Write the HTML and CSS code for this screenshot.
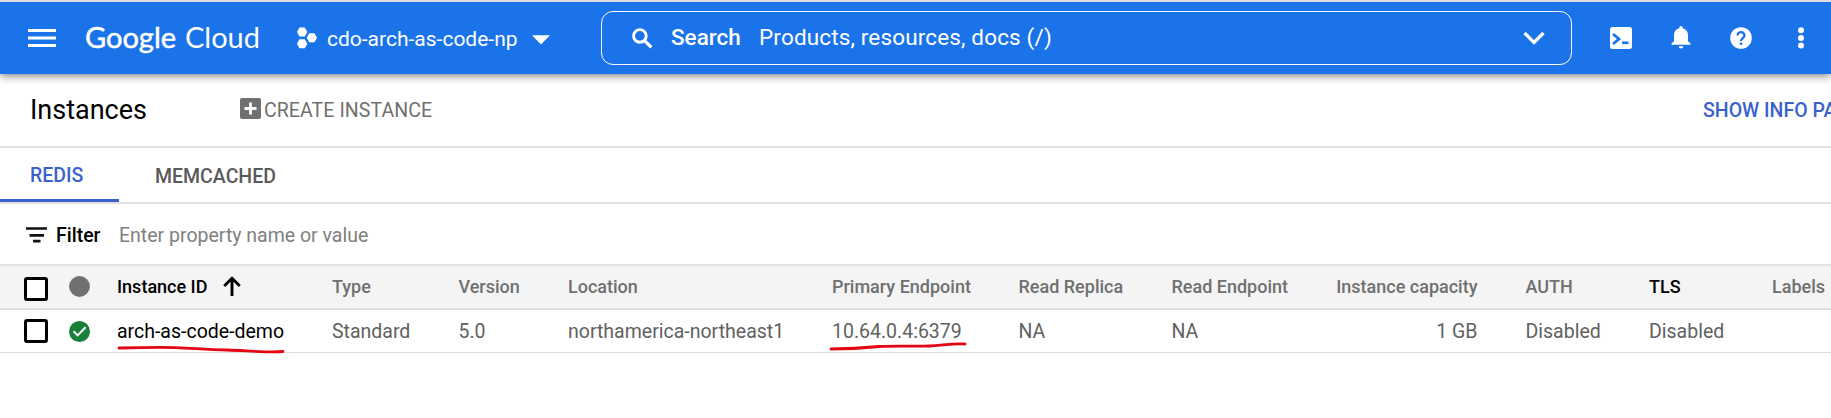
FILE: index.html
```
<!DOCTYPE html>
<html lang="en">
<head>
<meta charset="utf-8">
<title>Instances – Google Cloud</title>
<link rel="stylesheet" href="styles.css">
</head>
<body>
<header class="topbar">
  <svg class="menu" width="28" height="20" viewBox="0 0 28 20"><path d="M0 2.500h28M0 10h28M0 17.500h28" stroke="#fff" stroke-width="3"/></svg>
  <div class="logo"><span class="logo-google">Google</span><span class="logo-cloud">Cloud</span></div>
  <div class="project">
    <svg width="20" height="22" viewBox="0 0 20 22" fill="#fff"><path d="M2.400.5h5.400L10.300 5 7.800 9.500H2.400L0 5zM2.400 12.200h5.400l2.500 4.500-2.500 4.500H2.400L0 16.700zM12.200 6.300h5.200l2.600 4.500-2.600 4.500h-5.200L9.800 10.800z"/></svg>
    <span class="project-name">cdo-arch-as-code-np</span>
    <svg class="caret" width="18" height="10" viewBox="0 0 18 10"><path d="M0 .3h18L9 9.500z" fill="#fff"/></svg>
  </div>
  <div class="search">
    <svg width="21" height="21" viewBox="0 0 21 21" fill="none" stroke="#fff"><circle cx="7.900" cy="7.900" r="6.300" stroke-width="2.900"/><path d="M12.300 12.300l7 7" stroke-width="3.200"/></svg>
    <span class="search-label">Search</span>
    <span class="search-hint">Products, resources, docs (/)</span>
    <svg class="chevron" width="22" height="14" viewBox="0 0 22 14"><path d="M1.500 2l9.500 9.500L20.500 2" fill="none" stroke="#fff" stroke-width="3.200"/></svg>
  </div>
  <nav class="tools">
    <svg width="22" height="22" viewBox="0 0 22 22"><rect width="22" height="22" rx="2.500" fill="#fff"/><path d="M3 7l6 5-6 5" fill="none" stroke="#1a73e8" stroke-width="2.800"/><path d="M12 15.800h6.500" stroke="#1a73e8" stroke-width="2.600"/></svg>
    <svg width="20" height="24" viewBox="0 0 20 24" fill="#fff"><path d="M8.300 2.200V1.800a1.700 1.700 0 0 1 3.400 0v.4c3.500.8 5.300 3.700 5.300 7.300v5.700l2.500 2.300v1.300H.5v-1.300L3 15.200V9.500c0-3.600 1.800-6.500 5.300-7.300zM7.700 20.200h4.600a2.300 2.300 0 0 1-4.600 0z"/></svg>
    <svg width="22" height="22" viewBox="0 0 22 22"><circle cx="11" cy="11" r="10.800" fill="#fff"/><path d="M7.500 8.600a3.500 3.500 0 0 1 7 0c0 2.400-3.500 2.700-3.500 5.300" fill="none" stroke="#1a73e8" stroke-width="2.200"/><rect x="9.800" y="15.500" width="2.400" height="2.400" fill="#1a73e8"/></svg>
    <svg width="8" height="22" viewBox="0 0 8 22" fill="#fff"><circle cx="4" cy="3.300" r="3"/><circle cx="4" cy="11" r="3"/><circle cx="4" cy="18.600" r="3"/></svg>
  </nav>
</header>

<section class="actions">
  <h1 class="title">Instances</h1>
  <div class="create">
    <svg width="21" height="21" viewBox="0 0 21 21"><rect width="21" height="21" rx="2" fill="#707070"/><path d="M10.500 4.500v12M4.500 10.500h12" stroke="#fff" stroke-width="2.800"/></svg>
    <span class="create-label">CREATE INSTANCE</span>
  </div>
  <span class="info">SHOW INFO PANEL</span>
</section>

<nav class="tabs">
  <div class="tab tab-active"><span class="redis">REDIS</span></div>
  <div class="tab"><span class="memcached">MEMCACHED</span></div>
</nav>

<section class="filter">
  <svg width="21" height="16" viewBox="0 0 21 16"><path d="M0 1.500h21M3.500 8.300h14.500M7 14.200h7.500" stroke="#111" stroke-width="2.700"/></svg>
  <span class="filter-label">Filter</span>
  <span class="filter-hint">Enter property name or value</span>
</section>

<main class="table">
  <div class="row head">
    <span class="box"></span>
    <svg width="21" height="21" viewBox="0 0 21 21"><circle cx="10.500" cy="10.500" r="10.400" fill="#707070"/></svg>
    <span class="sorted"><span>Instance ID</span><svg width="18" height="20" viewBox="0 0 18 20"><path d="M9 20V2M1.200 10L9 2.200 16.800 10" fill="none" stroke="#000" stroke-width="2.900"/></svg></span>
    <span>Type</span><span>Version</span><span>Location</span><span>Primary Endpoint</span><span>Read Replica</span><span>Read Endpoint</span><span class="num">Instance capacity</span><span>AUTH</span><span class="dark">TLS</span><span>Labels</span>
  </div>
  <div class="row data">
    <span class="box"></span>
    <svg width="21" height="21" viewBox="0 0 21 21"><circle cx="10.500" cy="10.500" r="10.500" fill="#188038"/><path d="M4.600 10.300l4 4.100 8-8.100" fill="none" stroke="#fff" stroke-width="2"/></svg>
    <span class="marked"><span class="name">arch-as-code-demo</span><svg class="stroke" width="168" height="8" viewBox="0 0 168 8"><path d="M2 2C20 1.600 40 1.200 58 1.600C76 2 88 3.700 110 4C130 4.600 150 6.800 166 5.500" fill="none" stroke="#e30613" stroke-width="2.800" stroke-linecap="round"/></svg></span>
    <span>Standard</span><span>5.0</span><span>northamerica-northeast1</span>
    <span class="marked"><span>10.64.0.4:6379</span><svg class="stroke stroke-ip" width="138" height="9" viewBox="0 0 138 9"><path d="M2 7C20 7 35 6 50 4.500C70 3.500 85 4.600 100 4C115 3.200 122 1.300 136 2" fill="none" stroke="#e30613" stroke-width="2.800" stroke-linecap="round"/></svg></span>
    <span>NA</span><span>NA</span><span class="num">1 GB</span><span>Disabled</span><span>Disabled</span><span></span>
  </div>
</main>
</body>
</html>
```
FILE: styles.css
```
* { box-sizing: border-box; }
body { margin: 0; height: 418px; overflow: hidden; background: #fff; font-family: Roboto, "Liberation Sans", sans-serif; white-space: nowrap; }
svg { display: block; flex: none; }

.topbar { height: 74px; border-top: 2px solid #dadce0; background: #1a73e8; color: #fff; display: flex; align-items: center; padding-left: 28px; box-shadow: 0 1px 9px rgba(0, 0, 0, .6); position: relative; }
.logo { display: flex; width: 175px; margin-left: 29px; padding-bottom: 2px; font-family: Lato, sans-serif; font-size: 29px; line-height: 36px; }
.logo-google { width: 101px; -webkit-text-stroke: .5px #fff; }
.project { display: flex; align-items: center; width: 304px; margin-left: 37px; }
.project-name { width: 190px; margin: 2px 15px 0 10px; font-size: 21px; line-height: 28px; }
.caret { margin-top: 3px; }
.search { display: flex; align-items: center; width: 971px; height: 54px; border: 1px solid #fff; border-radius: 12px; padding-left: 30px; font-size: 22.5px; }
.search-label { width: 88px; margin-left: 18px; padding-bottom: 2px; font-weight: 500; }
.search-hint { padding-bottom: 2px; letter-spacing: .15px; }
.chevron { margin-left: auto; margin-right: 26px; }
.tools { display: grid; grid-template-columns: repeat(4, 60px); justify-items: center; align-items: center; margin-left: 19px; padding-bottom: 1px; }

.actions { height: 74px; border-bottom: 2px solid #e2e2e2; display: flex; align-items: center; padding-left: 30px; }
.title { margin: 0; width: 210px; font-size: 27px; font-weight: 400; line-height: 36px; color: #000; }
.create { display: flex; gap: 3px; color: #707070; font-size: 19.5px; line-height: 24px; }
.create-label { padding-top: 1px; letter-spacing: .08px; }
.info { margin-left: auto; width: 128px; padding-top: 2px; overflow: hidden; color: #3b62cc; font-size: 19.5px; font-weight: 500; line-height: 24px; }

.tabs { display: flex; height: 56px; border-bottom: 2px solid #e0e0e0; font-size: 19.5px; font-weight: 500; color: #5a5a5a; }
.tab { display: flex; align-items: center; padding: 2px 36px 0; }
.tab-active { width: 119px; padding: 4px 0 0 30px; border-bottom: 3px solid #3b62cc; color: #3b62cc; }

.filter { display: flex; align-items: center; height: 60px; padding: 2px 0 0 26px; font-size: 19.5px; }
.filter-label { width: 63px; margin-left: 9px; font-weight: 500; color: #000; }
.filter-hint { color: #808080; }

.row { display: grid; grid-template-columns: 45px 48px 215px 126.500px 109.500px 264px 186.500px 153px 164px 142px 48px 123.500px 123px 60px; align-items: center; padding-left: 24px; }
.row > :nth-child(11) { grid-column: 12; }
.row > :nth-child(12) { grid-column: 13; }
.row > :nth-child(13) { grid-column: 14; }
.head { height: 46px; padding-bottom: 2px; border-top: 2px solid #e2e2e2; border-bottom: 2px solid #dedede; background: #f4f4f4; color: #707070; font-size: 18px; font-weight: 500; }
.head .box { margin-top: 6px; }
.data { height: 43px; border-bottom: 1px solid #dedede; color: #616161; font-size: 19.5px; }
.box { width: 24px; height: 24px; border: 3px solid #000; border-radius: 3px; background: #fff; }
.sorted { display: flex; align-items: center; gap: 16px; color: #000; }
.dark, .name { color: #000; }
.num { text-align: right; }
.marked { position: relative; }
.stroke { position: absolute; left: 0; top: 26px; }
.stroke-ip { left: -3px; top: 22px; }
```
